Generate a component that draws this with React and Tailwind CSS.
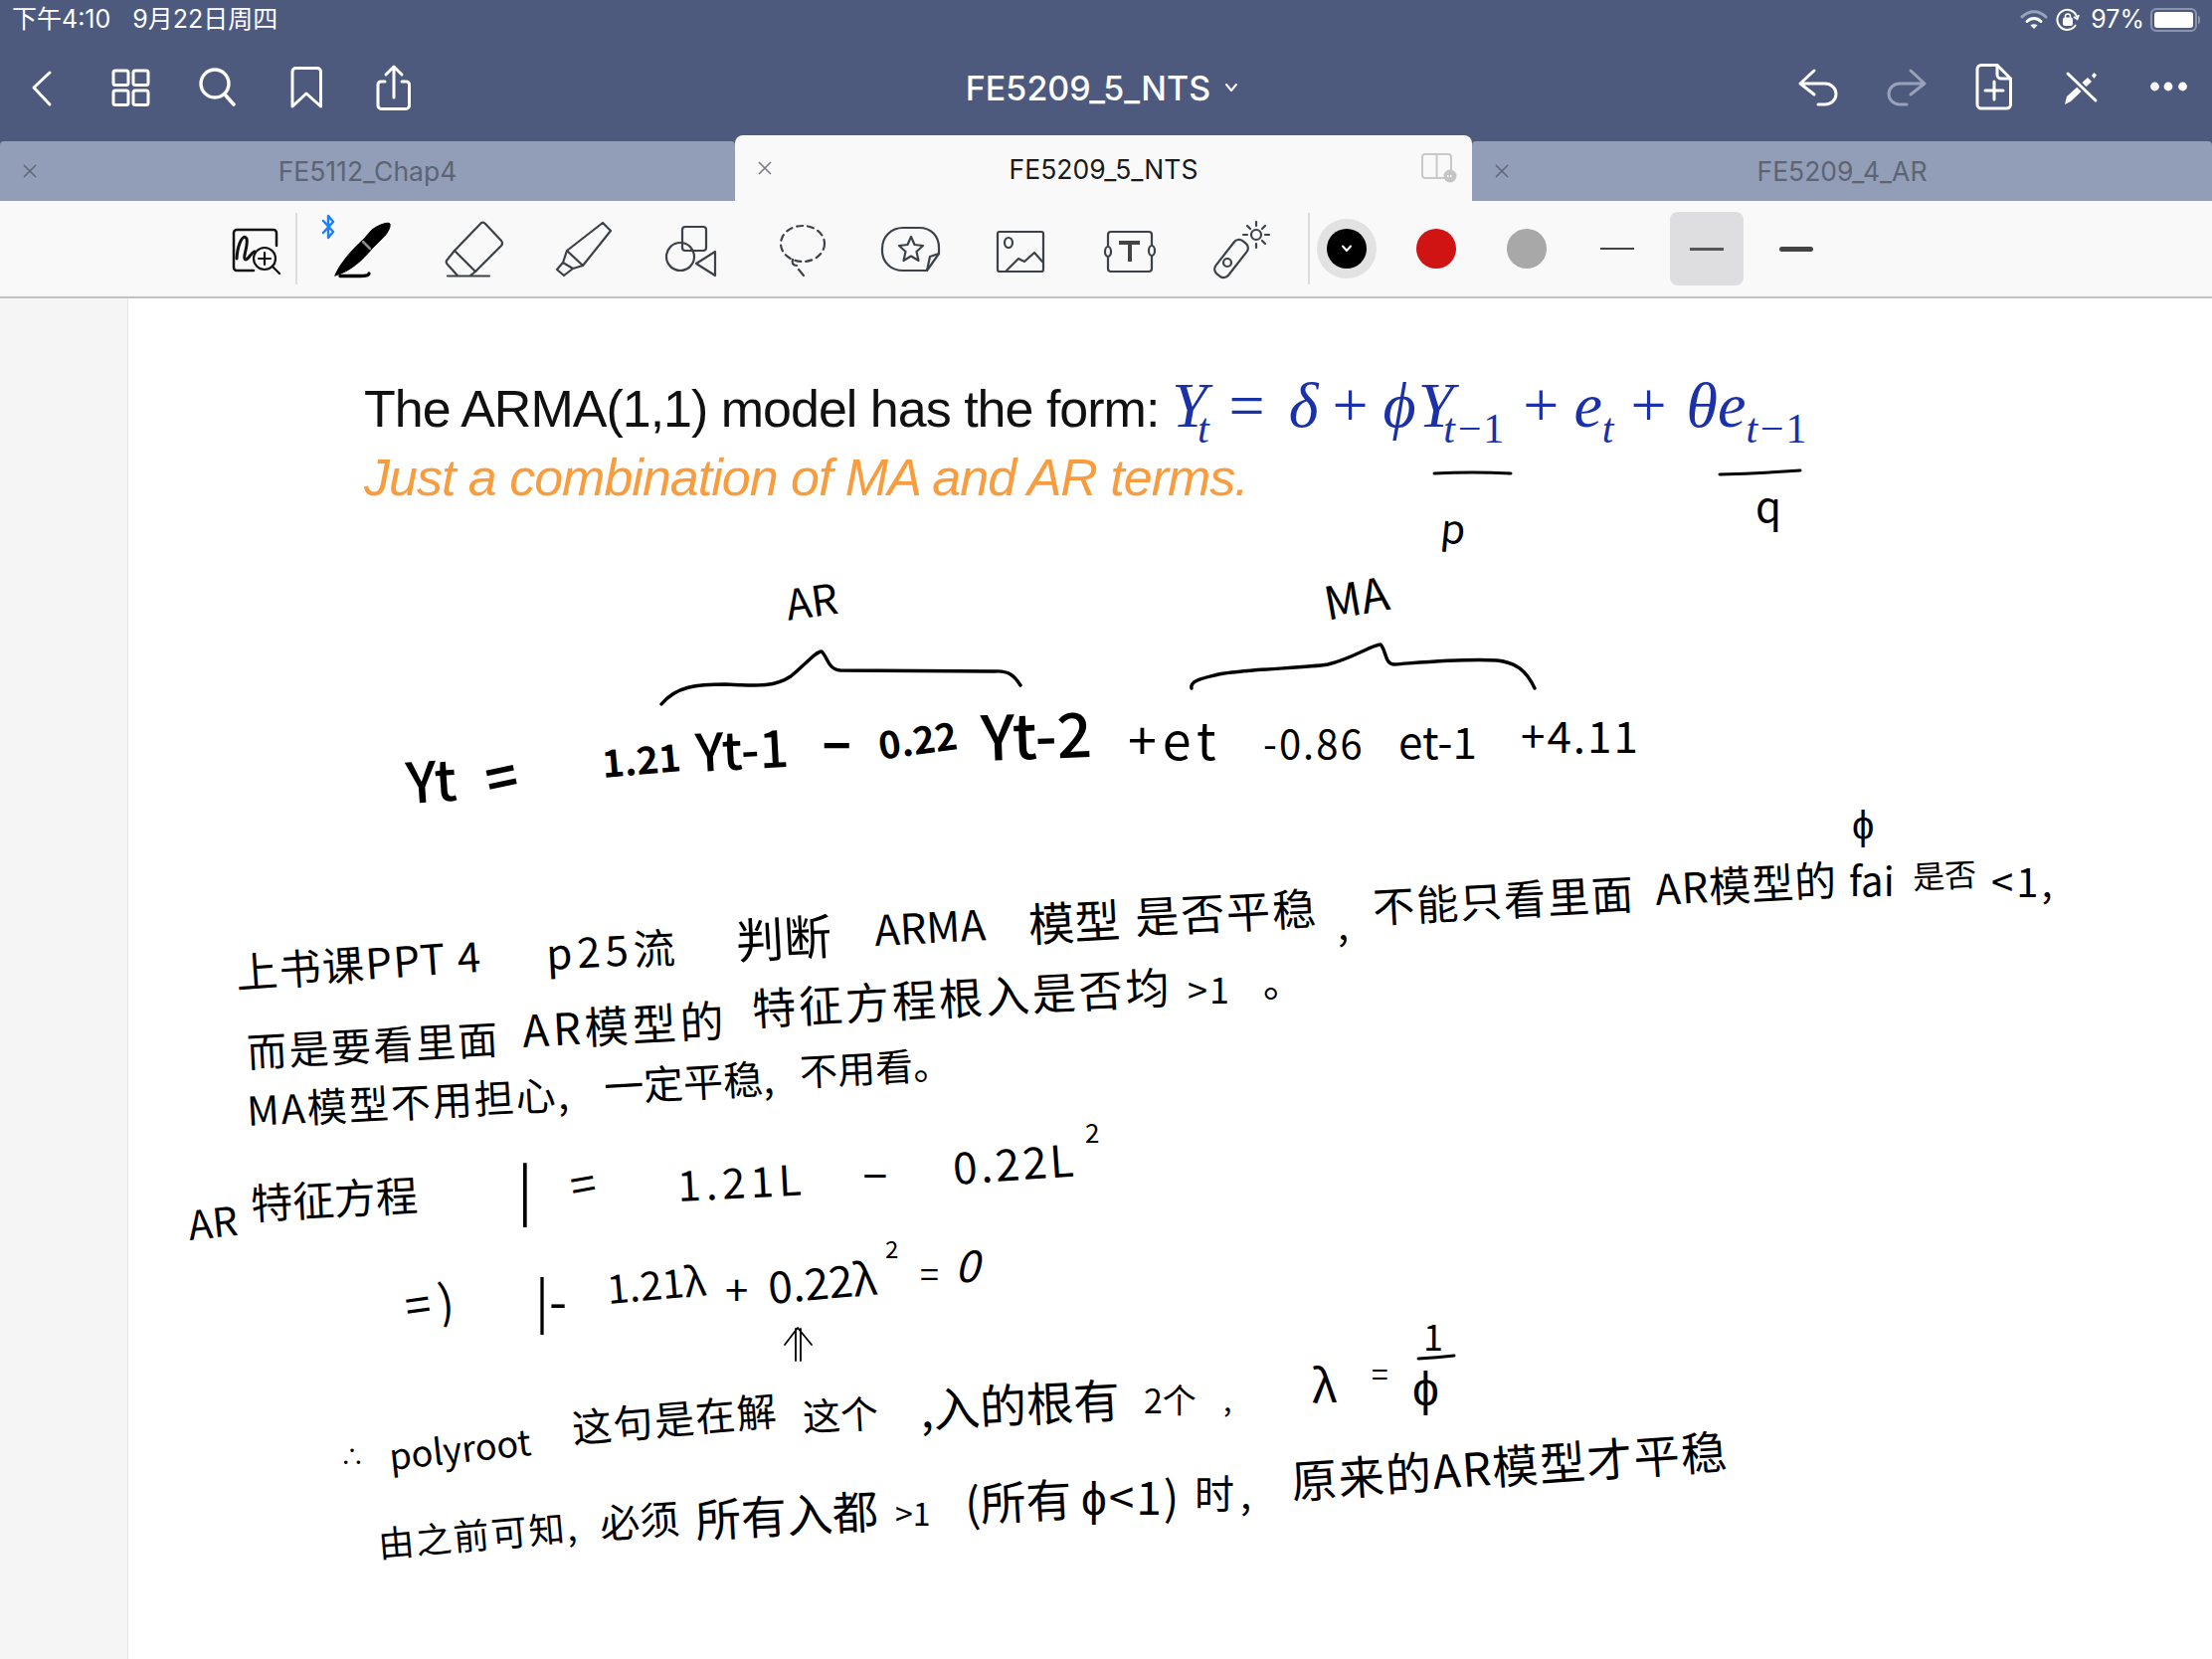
import React from 'react';

const white = { fill: 'none', stroke: 'currentColor', strokeWidth: 3, strokeLinecap: 'round', strokeLinejoin: 'round' };
const dark = { fill: 'none', stroke: '#3d4148', strokeWidth: 2.2, strokeLinecap: 'round', strokeLinejoin: 'round' };

function NavIcon({ children, className = 'text-white' }) {
  return (
    <svg width="48" height="48" viewBox="0 0 48 48" className={`shrink-0 overflow-visible ${className}`} {...white}>
      {children}
    </svg>
  );
}

function ToolIcon({ children, className = '' }) {
  return (
    <svg viewBox="0 0 72 72" className={`h-[72px] w-[72px] shrink-0 overflow-visible ${className}`} {...dark}>
      {children}
    </svg>
  );
}

function CloseX({ className = 'text-[#5f6878]' }) {
  return (
    <svg width="16" height="16" viewBox="0 0 16 16" className={className} fill="none" stroke="currentColor" strokeWidth="1.6">
      <path d="M2 2 L14 14 M14 2 L2 14" />
    </svg>
  );
}

function Tab({ title, active, extra, className = 'flex-1' }) {
  if (active) {
    return (
      <div className="grid h-[66px] w-[741px] grid-cols-[60px_1fr_60px] items-center rounded-t-[8px] bg-[#f9f9f9]">
        <div className="flex justify-center"><CloseX className="text-[#777b82]" /></div>
        <div className="pt-[3px] text-center text-[26.5px] text-[#1a1a1a]">{title}</div>
        {extra}
      </div>
    );
  }
  return (
    <div className={`mt-[6px] grid h-[60px] grid-cols-[60px_1fr_60px] items-center rounded-t-[4px] bg-[#929eb7] ${className}`}>
      <div className="flex justify-center"><CloseX /></div>
      <div className="pt-[1px] text-center text-[26.5px] text-[#5c6474]">{title}</div>
      <div />
    </div>
  );
}

// handwriting on the page, [text, placement]
const ink = [
  // top of the note
  ['AR', 'left-[790px] top-[606px] text-[42px] rotate-[-8deg]'],
  ['MA', 'left-[1331px] top-[604px] text-[46px] rotate-[-10deg]'],
  ['p', 'left-[1449px] top-[528px] text-[40px] rotate-[6deg]'],
  ['q', 'left-[1765px] top-[507px] text-[42px]'],
  ['Yt', 'left-[408px] top-[784px] text-[56px] rotate-[-4deg] font-medium'],
  ['=', 'left-[488px] top-[782px] text-[54px] rotate-[-12deg] font-bold'],
  ['1.21', 'left-[605px] top-[766px] text-[38px] rotate-[-5deg] font-bold'],
  ['Yt-1', 'left-[699px] top-[754px] text-[52px] rotate-[-3deg] font-medium'],
  ['–', 'left-[826px] top-[742px] text-[56px] font-bold'],
  ['0.22', 'left-[883px] top-[748px] text-[38px] rotate-[-8deg] font-bold'],
  ['Yt-2', 'left-[986px] top-[738px] text-[62px] rotate-[-2deg] font-medium'],
  ['+et', 'left-[1134px] top-[742px] text-[52px] tracking-[6px]'],
  ['-0.86', 'left-[1270px] top-[746px] text-[40px] tracking-[2px]'],
  ['et-1', 'left-[1406px] top-[744px] text-[44px]'],
  ['+4.11', 'left-[1529px] top-[738px] text-[44px] tracking-[2px]'],
  // first paragraph
  ['上书课PPT 4', 'left-[237px] top-[976px] text-[42px] tracking-[1.5px] rotate-[-4deg]'],
  ['p25流', 'left-[549px] top-[957px] text-[42px] tracking-[5px] rotate-[-3deg]'],
  ['判断', 'left-[740px] top-[943px] text-[48px] rotate-[-3deg]'],
  ['ARMA', 'left-[879px] top-[933px] text-[42px] rotate-[-3deg]'],
  ['模型', 'left-[1034px] top-[927px] text-[46px] rotate-[-3deg]'],
  ['是否平稳', 'left-[1141px] top-[920px] text-[44px] tracking-[2px] rotate-[-3deg]'],
  [',', 'left-[1345px] top-[928px] text-[40px]'],
  ['不能只看里面', 'left-[1380px] top-[910px] text-[42px] tracking-[2px] rotate-[-3deg]'],
  ['AR模型的', 'left-[1664px] top-[892px] text-[42px] tracking-[1px] rotate-[-3deg]'],
  ['fai', 'left-[1859px] top-[884px] text-[40px]'],
  ['是否', 'left-[1923px] top-[880px] text-[32px] rotate-[-3deg]'],
  ['<1,', 'left-[2002px] top-[885px] text-[40px] tracking-[3px]'],
  ['ϕ', 'left-[1862px] top-[827px] text-[40px]'],
  ['而是要看里面', 'left-[248px] top-[1056px] text-[40px] tracking-[2.5px] rotate-[-3deg]'],
  ['AR模型的', 'left-[525px] top-[1034px] text-[44px] tracking-[4px] rotate-[-3deg]'],
  ['特征方程根入是否均', 'left-[756px] top-[1012px] text-[44px] tracking-[3px] rotate-[-3deg]'],
  ['>1', 'left-[1194px] top-[993px] text-[36px] tracking-[2px]'],
  ['。', 'left-[1270px] top-[985px] text-[40px]'],
  ['MA模型不用担心,', 'left-[248px] top-[1115px] text-[40px] tracking-[2px] rotate-[-3deg]'],
  ['一定平稳,', 'left-[607px] top-[1091px] text-[40px] rotate-[-3deg]'],
  ['不用看。', 'left-[804px] top-[1076px] text-[38px] rotate-[-3deg]'],
  // AR equation
  ['AR', 'left-[189px] top-[1230px] text-[40px] rotate-[-6deg]'],
  ['特征方程', 'left-[252px] top-[1208px] text-[42px] rotate-[-3deg]'],
  ['|', 'left-[520px] top-[1193px] text-[58px]'],
  ['=', 'left-[573px] top-[1190px] text-[46px] rotate-[-10deg]'],
  ['1.21L', 'left-[681px] top-[1190px] text-[42px] tracking-[5px] rotate-[-3deg]'],
  ['–', 'left-[867px] top-[1175px] text-[48px]'],
  ['0.22L', 'left-[958px] top-[1172px] text-[44px] tracking-[3px] rotate-[-4deg]'],
  ['2', 'left-[1091px] top-[1138px] text-[26px]'],
  ['=)', 'left-[407px] top-[1311px] text-[46px] tracking-[8px] rotate-[-8deg]'],
  ['|-', 'left-[538px] top-[1306px] text-[52px]'],
  ['1.21λ', 'left-[610px] top-[1294px] text-[40px] rotate-[-5deg]'],
  ['+', 'left-[729px] top-[1295px] text-[42px]'],
  ['0.22λ', 'left-[772px] top-[1292px] text-[44px] rotate-[-5deg]'],
  ['2', 'left-[890px] top-[1255px] text-[24px]'],
  ['=', 'left-[925px] top-[1280px] text-[34px]'],
  ['0', 'left-[960px] top-[1270px] text-[44px] italic'],
  // polyroot notes
  ['∴', 'left-[342px] top-[1463px] text-[24px]'],
  ['polyroot', 'left-[391px] top-[1462px] text-[36px] rotate-[-6deg]'],
  ['这句是在解', 'left-[575px] top-[1434px] text-[40px] tracking-[1.5px] rotate-[-5deg]'],
  ['这个', 'left-[807px] top-[1423px] text-[38px] rotate-[-3deg]'],
  [',入的根有', 'left-[925px] top-[1415px] text-[47px] rotate-[-3deg]'],
  ['2个', 'left-[1150px] top-[1407px] text-[34px]'],
  [',', 'left-[1230px] top-[1406px] text-[30px]'],
  ['λ', 'left-[1319px] top-[1390px] text-[46px]'],
  ['=', 'left-[1379px] top-[1380px] text-[30px]'],
  ['1', 'left-[1431px] top-[1342px] text-[36px]'],
  ['ϕ', 'left-[1420px] top-[1392px] text-[48px]'],
  ['由之前可知,', 'left-[380px] top-[1550px] text-[36px] tracking-[2px] rotate-[-5deg]'],
  ['必须', 'left-[603px] top-[1530px] text-[40px] rotate-[-4deg]'],
  ['所有入都', 'left-[699px] top-[1526px] text-[46px] rotate-[-3deg]'],
  ['>1', 'left-[900px] top-[1520px] text-[32px]'],
  ['(所有', 'left-[970px] top-[1510px] text-[46px] rotate-[-3deg]'],
  ['ϕ<1)', 'left-[1087px] top-[1503px] text-[46px] tracking-[2px]'],
  ['时,', 'left-[1201px] top-[1500px] text-[40px] tracking-[6px]'],
  ['原来的AR模型才平稳', 'left-[1298px] top-[1487px] text-[46px] tracking-[1.5px] rotate-[-4deg]'],
];

export default function App() {
  return (
    <div className="flex h-[1668px] w-[2224px] flex-col overflow-hidden bg-white font-['Inter','Noto_Sans_CJK_SC',sans-serif]">
      {/* status + nav + tabs */}
      <div className="bg-[#4d5a7e] text-white">
        <div className="flex h-10 items-center justify-between pl-[12px] pr-[12px] text-[25px]">
          <div className="flex gap-[22px]">
            <span>下午4:10</span>
            <span>9月22日周四</span>
          </div>
          <div className="flex items-center">
            <svg width="28" height="22" viewBox="0 0 28 22" fill="none" strokeWidth="3" strokeLinecap="round">
              <path d="M2 8 C9 1 19 1 26 8" stroke="#98a2ba" />
              <path d="M7 12.5 C11 8.5 17 8.5 21 12.5" stroke="#fff" />
              <path d="M14 20 L10.5 16.5 C12.5 14.8 15.5 14.8 17.5 16.5 Z" fill="#fff" stroke="none" />
            </svg>
            <svg width="24" height="24" viewBox="0 0 24 24" className="ml-[8px]" fill="none" stroke="#fff" strokeWidth="2">
              <path d="M20 17 A10 10 0 1 1 21 9" />
              <path d="M18 9 L21.5 11 L23 7" />
              <rect x="8" y="10.5" width="8" height="6.5" rx="1" fill="#fff" />
              <path d="M9.5 10.5 V8.5 A2.5 2.5 0 0 1 14.5 8.5 V10.5" strokeWidth="1.5" />
            </svg>
            <span className="ml-[11px]">97%</span>
            <div className="ml-[6px] flex items-center">
              <div className="flex h-[24px] w-[47px] items-center rounded-[6px] border-2 border-[#8a94ad] p-[2px]">
                <div className="h-full w-full rounded-[3px] bg-white" />
              </div>
              <div className="ml-[1px] h-[8px] w-[2px] rounded-r bg-[#8a94ad]" />
            </div>
          </div>
        </div>

        <div className="grid h-[96px] grid-cols-3 items-center">
          <div className="flex gap-[40px] pl-[17px]">
            <NavIcon><path d="M33 9 L17 24 L33 41" /></NavIcon>
            <NavIcon>
              <rect x="9" y="7" width="15" height="14.5" rx="2" />
              <rect x="29" y="7" width="15" height="14.5" rx="2" />
              <rect x="9" y="27" width="15" height="14.5" rx="2" />
              <rect x="29" y="27" width="15" height="14.5" rx="2" />
            </NavIcon>
            <NavIcon>
              <circle cx="23" cy="20" r="14" strokeWidth="3.4" />
              <path d="M33 31 L42 41" strokeWidth="3.6" />
            </NavIcon>
            <NavIcon>
              <path d="M13 8 a3.5 3.5 0 0 1 3.5-3.5 H38 a3.5 3.5 0 0 1 3.5 3.5 V43 L27 30 L13 43 Z" />
            </NavIcon>
            <NavIcon>
              <path d="M18 18 H14 a3 3 0 0 0 -3 3 V42 a3.5 3.5 0 0 0 3.5 3.5 H39 a3.5 3.5 0 0 0 3.5-3.5 V21 a3 3 0 0 0 -3-3 H35" />
              <path d="M27 34 V3 M19 11 L27 3 L35 11" />
            </NavIcon>
          </div>
          <div className="flex items-center justify-center gap-[14px] pr-[8px] text-[34px] font-medium">
            <span>FE5209_5_NTS</span>
            <svg width="14" height="10" viewBox="0 0 14 10" fill="none" stroke="#fff" strokeWidth="2" strokeLinecap="round" strokeLinejoin="round">
              <path d="M2 2 L7 8 L12 2" />
            </svg>
          </div>
          <div className="flex justify-end gap-[40px] pr-[20px]">
            <NavIcon>
              <path d="M20 7 L6 20 L20 31 M6 20 H31 A11 10.5 0 0 1 31 41 H24" />
            </NavIcon>
            <NavIcon className="text-[#98a1b7]">
              <path d="M29 7 L43 20 L29 31 M43 20 H18 A11 10.5 0 0 0 18 41 H25" />
            </NavIcon>
            <NavIcon>
              <path d="M12 1.5 H28 L41.5 15 V41 a4 4 0 0 1 -4 4 H12 a4 4 0 0 1 -4 -4 V5.5 a4 4 0 0 1 4 -4 Z" />
              <path d="M28 1.5 V11 a4 4 0 0 0 4 4 H41.5" />
              <path d="M25 18 V36 M16 27 H34" />
            </NavIcon>
            <NavIcon>
              <path d="M8 41 L10 33 L31 14 L35 18 L14 38 Z" fill="#fff" stroke="none" />
              <path d="M35 12 L37.5 9 L40 11.5 L37.5 15 Z" fill="#fff" stroke="none" />
              <path d="M11 10 L39 37" stroke="#4d5a7e" strokeWidth="7" />
              <path d="M11 10 L39 37" />
            </NavIcon>
            <NavIcon>
              <circle cx="10.5" cy="23" r="4.4" fill="#fff" stroke="none" />
              <circle cx="24" cy="23" r="4.4" fill="#fff" stroke="none" />
              <circle cx="38.5" cy="23" r="4.4" fill="#fff" stroke="none" />
            </NavIcon>
          </div>
        </div>

        <div className="flex h-[66px] items-start">
          <Tab title="FE5112_Chap4" className="w-[739px]" />
          <Tab
            title="FE5209_5_NTS"
            active
            extra={
              <svg width="36" height="32" viewBox="0 0 36 32" className="ml-[9px]" fill="none" stroke="#c8c8c8" strokeWidth="2">
                <rect x="1" y="2" width="29" height="24" rx="3" />
                <path d="M15.5 2 V26" />
                <circle cx="29" cy="24" r="6.5" fill="#c4c4c4" stroke="none" />
                <path d="M26 24 H32" stroke="#fff" strokeDasharray="1.5 1.5" />
              </svg>
            }
          />
          <Tab title="FE5209_4_AR" />
        </div>
      </div>

      {/* toolbar */}
      <div className="flex h-[98px] items-center border-b-2 border-[#c2c2c2] bg-[#f9f9f9] pl-[221px]">
        <ToolIcon>
          <path d="M50 17 H17 a3 3 0 0 0 -3 3 V55 a3 3 0 0 0 3 3 H34 M57 33 V20 a3 3 0 0 0 -3 -3 H50" stroke="#111" strokeWidth="2.5" />
          <path d="M17 46 C18 30 24 20 27 26 C29 33 22 46 26 47 C29 47 31 40 35 39" stroke="#111" strokeWidth="3" />
          <circle cx="45" cy="46" r="11" stroke="#111" strokeWidth="2.2" />
          <path d="M45 40 V52 M39 46 H51 M53 54 L60 61" stroke="#111" strokeWidth="2.2" />
        </ToolIcon>
        <div className="ml-[4px] h-[72px] w-[2px] bg-[#dcdcdc]" />
        <div className="ml-[23px] flex gap-[38px]">
          <ToolIcon className="mr-[8px]">
            <path d="M3 8 L13 19 L8 25 V3 L13 9 L3 20" stroke="#1a7ffa" strokeWidth="2.4" />
            <path d="M15 63 C19 52 31 38 44 26 L52 17 C60 11 69 9 70 11 C71 15 67 22 60 28 L52 36 C42 48 30 59 15 63 Z" fill="#000" stroke="#000" strokeWidth="1" />
            <path d="M43 29 L50 36" stroke="#8d8d8d" strokeWidth="2.5" />
            <path d="M20 63.5 H40 C46 63.5 49 63 49 61" stroke="#000" strokeWidth="3.4" />
          </ToolIcon>
          <ToolIcon>
            <path d="M44 10 Q46 9 48 11 L64 28 Q66 31 64 33 L38 59 L17 38 Z" />
            <path d="M17 38 L9 48 Q8 50 10 52 L20 63 M38 59 L33 63 M10 63.5 H52" />
          </ToolIcon>
          <ToolIcon>
            <path d="M56 10 L64 18 L36 53 L20 38 Z M20 38 L16 50 L10 57 L17 63 L26 56 L36 53 M16 50 L26 56" />
          </ToolIcon>
          <ToolIcon>
            <rect x="26" y="14" width="24" height="24" rx="3" />
            <circle cx="24" cy="44" r="14" />
            <path d="M59 39 L40 51 L59 63 Z" />
          </ToolIcon>
          <ToolIcon>
            <ellipse cx="37" cy="31" rx="22" ry="18" strokeDasharray="6 5" />
            <path d="M27 47 C26 50 27 53 31 53 M33 57 L38 63" />
          </ToolIcon>
          <ToolIcon>
            <path d="M28 15 H44 C56 15 64 23 64 35 V41 L52 58 H28 C16 58 7 50 7 38 V36 C7 24 16 15 28 15 Z" />
            <path d="M64 41 L55 44 L52 58" />
            <path d="M36 24 L39.5 32 L48 33 L41.5 39 L43.5 48 L36 43.5 L28.5 48 L30.5 39 L24 33 L32.5 32 Z" />
          </ToolIcon>
          <ToolIcon>
            <rect x="13" y="19" width="46" height="40" rx="2" />
            <ellipse cx="24" cy="30" rx="4" ry="5" />
            <path d="M22 58 L34 46 L40 49 L50 40 L58 49" />
          </ToolIcon>
          <ToolIcon>
            <path d="M14 33 V22 a3 3 0 0 1 3 -3 H55 a3 3 0 0 1 3 3 V32 M58 44 V56 a3 3 0 0 1 -3 3 H17 a3 3 0 0 1 -3 -3 V45" />
            <ellipse cx="14" cy="39" rx="3" ry="5" />
            <ellipse cx="58" cy="38" rx="3" ry="5" />
            <path d="M25 30 H46 M36 30 V49" strokeWidth="4" strokeLinecap="butt" stroke="#444" />
          </ToolIcon>
          <ToolIcon>
            <rect x="20" y="25" width="16" height="42" rx="6" transform="rotate(38 28 46)" />
            <circle cx="24" cy="50" r="4" />
            <circle cx="53" cy="22" r="5" />
            <path d="M53 9 V13 M53 31 V35 M40 22 H44 M62 22 H66 M44 13 L47 16 M62 13 L59 16 M62 31 L59 28" />
          </ToolIcon>
        </div>
        <div className="ml-[33px] h-[72px] w-[2px] bg-[#dcdcdc]" />
        <div className="ml-[7px] flex h-[60px] w-[60px] items-center justify-center rounded-full bg-[#e2e2e2]">
          <div className="flex h-[40px] w-[40px] items-center justify-center rounded-full bg-black">
            <svg width="14" height="10" viewBox="0 0 14 10" fill="none" stroke="#fff" strokeWidth="2" strokeLinecap="round" strokeLinejoin="round">
              <path d="M3 2.5 L7 7 L11 2.5" />
            </svg>
          </div>
        </div>
        <div className="ml-[40px] h-[40px] w-[40px] rounded-full bg-[#d01313]" />
        <div className="ml-[51px] h-[40px] w-[40px] rounded-full bg-[#a8a8a8]" />
        <div className="ml-[34px] flex gap-[16px]">
          <div className="flex h-[74px] w-[74px] items-center justify-center">
            <div className="h-[2px] w-[34px] bg-[#444]" />
          </div>
          <div className="flex h-[74px] w-[74px] items-center justify-center rounded-[8px] bg-[#dedee0]">
            <div className="h-[3px] w-[34px] bg-[#555]" />
          </div>
          <div className="flex h-[74px] w-[74px] items-center justify-center">
            <div className="h-[5px] w-[34px] rounded-full bg-[#444]" />
          </div>
        </div>
      </div>

      {/* page */}
      <div className="flex flex-1">
        <div className="w-[129px] border-r border-[#e6e6e6] bg-[#f5f5f5]" />
        <div className="flex-1 pl-[237px] pt-[60px]">
          <div className="flex h-[85px] items-baseline whitespace-nowrap">
            <span className="font-['Liberation_Sans',sans-serif] text-[52px] tracking-[-1px] text-[#111]">The ARMA(1,1) model has the form:</span>
            <span className="ml-[13px] font-['Liberation_Serif',serif] text-[64px] italic text-[#1b31a8]">
              Y<span className="ml-[-10px] align-[-16px] text-[42px]">t</span>
              <span className="ml-[20px] not-italic">=</span>
              <span className="ml-[24px]">δ</span>
              <span className="ml-[14px] not-italic">+</span>
              <span className="ml-[15px]">ϕ</span>
              <span className="ml-[2px]">Y</span><span className="ml-[-10px] align-[-16px] text-[42px]">t−<span className="not-italic">1</span></span>
              <span className="ml-[19px] not-italic">+</span>
              <span className="ml-[15px]">e</span>
              <span className="align-[-16px] text-[42px]">t</span>
              <span className="ml-[17px] not-italic">+</span>
              <span className="ml-[20px]">θ</span>
              <span>e</span><span className="align-[-16px] text-[42px]">t−<span className="not-italic">1</span></span>
            </span>
          </div>
          <div className="font-['Liberation_Sans',sans-serif] text-[52px] italic leading-[70px] tracking-[-1px] text-[#f99c3e]">
            Just a combination of MA and AR terms.
          </div>
        </div>
      </div>

      {/* ink strokes */}
      <svg className="pointer-events-none absolute left-0 top-0 h-[1668px] w-[2224px]" viewBox="0 0 2224 1668" fill="none" stroke="#000" strokeLinecap="round" strokeLinejoin="round">
        <path d="M1442 476 Q1480 474 1519 476" strokeWidth="3" />
        <path d="M1729 477 Q1770 476 1810 473" strokeWidth="3" />
        <path d="M665 708 C680 690 700 688 730 688 C765 690 780 690 795 680 C810 668 820 655 826 655 C832 660 832 673 845 674 L1000 675 C1015 674 1020 680 1026 689" strokeWidth="3.4" />
        <path d="M1198 692 C1196 684 1210 682 1225 678 C1260 672 1310 672 1335 668 C1360 662 1380 648 1388 648 C1394 654 1392 668 1402 668 C1430 666 1470 662 1505 664 C1525 666 1535 675 1543 692" strokeWidth="3.4" />
        <path d="M800 1368 V1336 M805 1368 V1336 M789 1352 L802 1335 L816 1352" strokeWidth="1.8" />
        <path d="M1426 1366 Q1445 1365 1462 1363" strokeWidth="3" />
      </svg>
      {ink.map(([text, place], i) => (
        <span
          key={i}
          className={`absolute origin-left -translate-y-1/2 whitespace-nowrap font-['Noto_Sans_CJK_SC',sans-serif] leading-none text-black ${place}`}
        >
          {text}
        </span>
      ))}
    </div>
  );
}
